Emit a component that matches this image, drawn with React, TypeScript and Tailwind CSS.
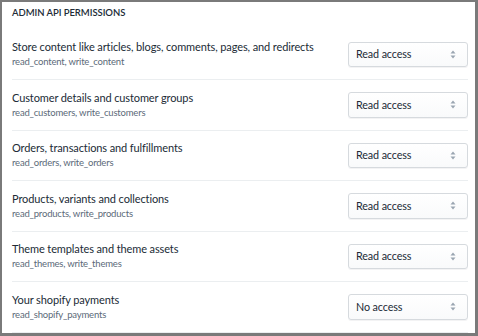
const permissions = [
  { title: 'Store content like articles, blogs, comments, pages, and redirects', scopes: 'read_content, write_content', access: 'Read access' },
  { title: 'Customer details and customer groups', scopes: 'read_customers, write_customers', access: 'Read access' },
  { title: 'Orders, transactions and fulfillments', scopes: 'read_orders, write_orders', access: 'Read access' },
  { title: 'Products, variants and collections', scopes: 'read_products, write_products', access: 'Read access' },
  { title: 'Theme templates and theme assets', scopes: 'read_themes, write_themes', access: 'Read access' },
  { title: 'Your shopify payments', scopes: 'read_shopify_payments', access: 'No access' },
];

const SelectArrows = () => (
  <svg width="6" height="9" viewBox="0 0 6 9" className="shrink-0">
    <path d="M3 0.5 L5.5 3.5 H0.5 Z" fill="#9aa5b1" />
    <path d="M3 8.5 L5.5 5.5 H0.5 Z" fill="#9aa5b1" />
  </svg>
);

export default function App() {
  return (
    <div
      className="h-[336px] w-[478px] overflow-hidden border-[#7a7a7a] border-t-2 border-l-2 border-r-[3px] border-b-[3px] bg-white pl-[10px] pr-[7px]"
      style={{ fontFamily: 'Lato, "Noto Sans", sans-serif' }}
    >
      <h2 className="h-[27.5px] pt-[5px] text-[9.5px] leading-[12px] font-semibold uppercase tracking-[-0.005em] text-[#212b36]">
        Admin API permissions
      </h2>
      <ul>
        {permissions.map((p) => (
          <li key={p.scopes} className="flex h-[50.5px] items-center justify-between border-b border-[#ebeef0]">
            <div className="flex flex-col">
              <span className="text-[11px] leading-[15px] tracking-[-0.01em] text-[#212b36]">{p.title}</span>
              <span className="text-[9.5px] leading-[15px] tracking-[-0.02em] text-[#5c6a79]">{p.scopes}</span>
            </div>
            <div className="flex h-[25.5px] w-[120px] items-center justify-between rounded-[3px] border border-[#d6dade] bg-gradient-to-b from-white to-[#f9fafb] pl-[7px] pr-[11px] shadow-[0_1px_0_rgba(22,29,37,0.05)]">
              <span className="text-[10.75px] tracking-[-0.01em] text-[#212b36]">{p.access}</span>
              <SelectArrows />
            </div>
          </li>
        ))}
      </ul>
    </div>
  );
}
